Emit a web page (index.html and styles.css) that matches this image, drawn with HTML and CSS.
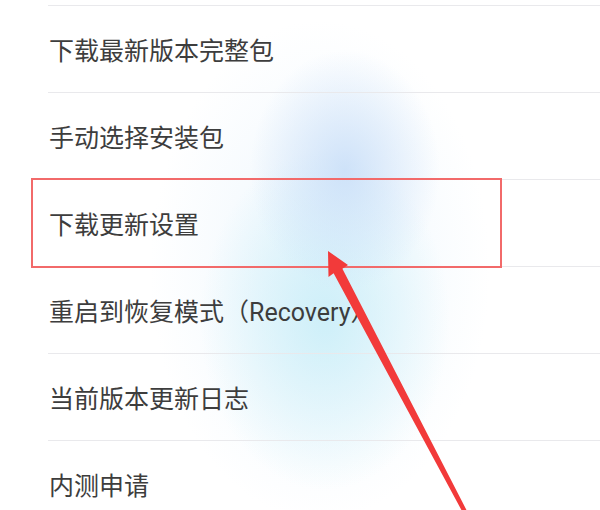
FILE: index.html
```html
<!DOCTYPE html>
<html lang="zh-CN">
<head>
<meta charset="utf-8">
<title>更新设置</title>
<link rel="stylesheet" href="styles.css">
</head>
<body>
<div class="screen">
  <ul class="menu">
    <li class="item">下载最新版本完整包</li>
    <li class="item">手动选择安装包</li>
    <li class="item">下载更新设置</li>
    <li class="item">重启到恢复模式（Recovery）</li>
    <li class="item">当前版本更新日志</li>
    <li class="item">内测申请</li>
  </ul>
  <div class="highlight"></div>
  <svg class="arrow" width="600" height="510" viewBox="0 0 600 510">
    <polygon points="328,251 348,265 342.4,268.7 467.5,512 462.5,512 333.6,273.3 328.5,277" fill="#f23a3a"/>
  </svg>
</div>
</body>
</html>
```

FILE: styles.css
```css
html, body {
  margin: 0;
  padding: 0;
}

body {
  width: 600px;
  height: 510px;
  overflow: hidden;
  background: #ffffff;
  font-family: "Roboto", "Noto Sans CJK SC", "Noto Sans", sans-serif;
}

.screen {
  position: relative;
  width: 600px;
  height: 510px;
  overflow: hidden;
  background:
    radial-gradient(ellipse 95px 120px at 345px 170px, rgba(200, 222, 248, 0.85), rgba(200, 222, 248, 0) 100%),
    radial-gradient(ellipse 125px 170px at 325px 320px, rgba(200, 238, 248, 0.85), rgba(200, 238, 248, 0) 100%),
    radial-gradient(ellipse 170px 250px at 320px 270px, rgba(228, 242, 252, 0.7), rgba(228, 242, 252, 0) 100%),
    #ffffff;
}

.menu {
  list-style: none;
  margin: 0;
  padding: 5px 0 0 48px;
}

.item {
  display: flex;
  align-items: center;
  height: 86px;
  padding-left: 1px;
  border-top: 1px solid #e9e9ec;
  font-size: 25px;
  color: #3d3d3d;
}

.highlight {
  position: absolute;
  left: 31px;
  top: 178px;
  width: 467px;
  height: 86px;
  border: 2px solid #f26a6a;
}

.arrow {
  position: absolute;
  left: 0;
  top: 0;
}
```
